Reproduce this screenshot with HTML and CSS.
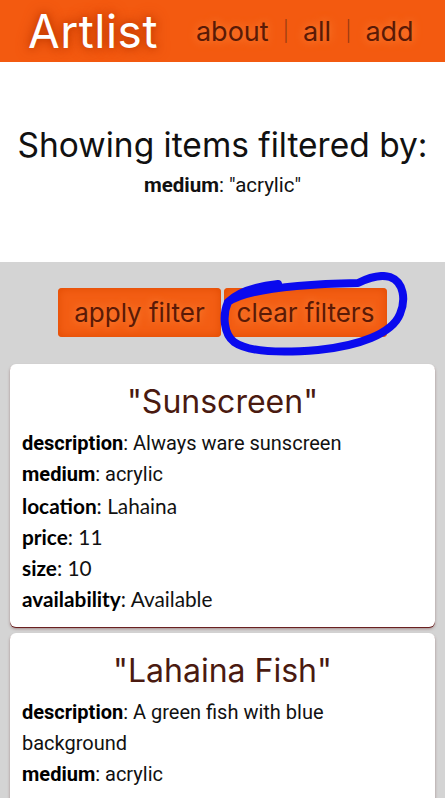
FILE: index.html
```html
<!DOCTYPE html>
<html lang="en">
<head>
<meta charset="utf-8">
<title>Artlist</title>
<link rel="stylesheet" href="styles.css">
</head>
<body>
<header class="topbar">
  <h1 class="brand">Artlist</h1>
  <nav class="nav">
    <a class="nav-link">about</a>
    <span class="nav-sep">|</span>
    <a class="nav-link">all</a>
    <span class="nav-sep">|</span>
    <a class="nav-link">add</a>
  </nav>
</header>

<section class="filter-info">
  <h2 class="filter-title">Showing items filtered by:</h2>
  <p class="filter-line"><b>medium</b>: "acrylic"</p>
</section>

<main class="content">
  <div class="actions">
    <button class="btn">apply filter</button>
    <button class="btn">clear filters</button>
    <svg class="scribble" viewBox="0 0 190 86" width="190" height="86" aria-hidden="true">
      <path d="M10 30 C 30 16, 90 12, 140 11 C 150 6, 162 2, 172 5 C 186 10, 188 28, 182 42 C 174 62, 140 74, 100 78 C 64 81, 30 80, 16 70 C 6 62, 4 44, 10 30 C 20 20, 40 14, 60 12"
            fill="none" stroke="#0a0aee" stroke-width="8" stroke-linecap="round" stroke-linejoin="round"/>
    </svg>
  </div>

  <article class="card">
    <h3 class="card-title">"Sunscreen"</h3>
    <p class="row"><b>description</b>: Always ware sunscreen</p>
    <p class="row"><b>medium</b>: acrylic</p>
    <p class="row alt"><b>location</b>: Lahaina</p>
    <p class="row alt"><b>price</b>: 11</p>
    <p class="row alt"><b>size</b>: 10</p>
    <p class="row alt"><b>availability</b>: Available</p>
  </article>

  <article class="card">
    <h3 class="card-title">"Lahaina Fish"</h3>
    <p class="row"><b>description</b>: A green fish with blue background</p>
    <p class="row"><b>medium</b>: acrylic</p>
    <p class="row alt"><b>location</b>: Lahaina</p>
  </article>
</main>
</body>
</html>
```

FILE: styles.css
```css
* { box-sizing: border-box; }

html, body {
  margin: 0;
  padding: 0;
}

body {
  font-family: Roboto, "Liberation Sans", sans-serif;
  background: #d4d4d4;
  color: #111;
  overflow: hidden;
}

.topbar {
  height: 62px;
  background: #f35a10;
  display: flex;
  align-items: center;
  padding: 0 0 0 28px;
}

.brand {
  margin: 0;
  font-family: Inter, "Open Sans", sans-serif;
  font-weight: 400;
  font-size: 46px;
  letter-spacing: 0.5px;
  color: #fff;
  text-shadow: 0 0 14px #b83400, 0 0 6px #d04400;
  line-height: 1;
}

.nav {
  margin-left: 38px;
  display: flex;
  align-items: center;
  gap: 14px;
  font-family: Inter, "Open Sans", sans-serif;
  font-size: 27px;
  color: #5a1a06;
  text-shadow: 0 0 10px #ff8a40;
}

.nav-link { color: #5a1a06; }
.nav-sep {
  color: #9a3a12;
  font-size: 20px;
  font-weight: 300;
  text-shadow: none;
}

.filter-info {
  background: #fff;
  height: 200px;
  text-align: center;
  padding-top: 63px;
}

.filter-title {
  margin: 0;
  font-family: Inter, "Open Sans", sans-serif;
  font-weight: 400;
  font-size: 33.5px;
  line-height: 40px;
  color: #111;
}

.filter-line {
  margin: 7px 0 0;
  font-size: 20.5px;
  line-height: 26px;
}

.content {
  padding: 26px 10px 0;
}

.actions {
  position: relative;
  display: flex;
  justify-content: center;
  gap: 3px;
  margin-bottom: 27px;
}

.btn {
  height: 49px;
  width: 163px;
  border: none;
  border-radius: 4px;
  background: #f35e14;
  font-family: Inter, "Open Sans", sans-serif;
  font-size: 26px;
  color: #5a1a06;
  text-shadow: 0 0 8px #ff8a40;
  box-shadow: inset 0 0 10px #e04a00;
  padding: 0;
}

.scribble {
  position: absolute;
  left: 208px;
  top: -16px;
}

.card {
  background: #fff;
  border-radius: 6px;
  box-shadow: 0 1px 0 #6a2020, 0 2px 3px rgba(90, 30, 30, 0.4);
  padding: 18px 12px 13px;
  margin-bottom: 6px;
}

.card-title {
  margin: 0 0 6px;
  text-align: center;
  font-family: Inter, "Open Sans", sans-serif;
  font-weight: 400;
  font-size: 32px;
  line-height: 40px;
  color: #4a1a10;
}

.row {
  margin: 0;
  font-size: 20px;
  line-height: 31px;
  color: #111;
}

.row b { color: #000; }

.row.alt {
  font-family: Lato, Roboto, sans-serif;
  font-size: 20.8px;
}
```
